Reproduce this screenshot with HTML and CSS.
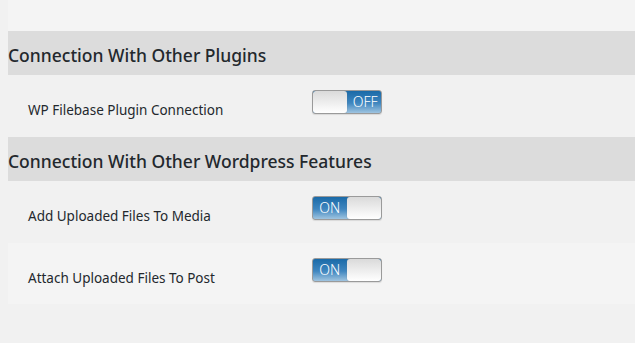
FILE: index.html
```html
<!DOCTYPE html>
<html lang="en">
<head>
	<meta charset="UTF-8">
	<title>Settings</title>
	<link rel="stylesheet" href="styles.css">
</head>
<body>
<div class="wrap">
	<div class="top-space"></div>

	<h3 class="section-title">Connection With Other Plugins</h3>
	<div class="row">
		<div class="label">WP Filebase Plugin Connection</div>
		<div class="field">
			<span class="switch off"><span class="knob"></span><span class="state">OFF</span></span>
		</div>
	</div>

	<h3 class="section-title">Connection With Other Wordpress Features</h3>
	<div class="row">
		<div class="label">Add Uploaded Files To Media</div>
		<div class="field">
			<span class="switch on"><span class="state">ON</span><span class="knob"></span></span>
		</div>
	</div>
	<div class="row alt">
		<div class="label">Attach Uploaded Files To Post</div>
		<div class="field">
			<span class="switch on"><span class="state">ON</span><span class="knob"></span></span>
		</div>
	</div>
</div>
</body>
</html>
```
FILE: styles.css
```css
*{
	margin: 0;
	padding: 0;
	box-sizing: border-box;
}
body{
	background: #f1f1f1;
	font-family: "Noto Sans", "Open Sans", sans-serif;
	color: #23282d;
	overflow: hidden;
}
.wrap{
	margin-left: 8px;
}
.top-space{
	height: 31px;
	background: #f4f4f4;
}
.section-title{
	height: 44px;
	background: #dcdcdc;
	font-size: 17.5px;
	font-weight: 500;
	line-height: 48px;
}
.row{
	display: flex;
	height: 62px;
}
.row.alt{
	background: #f4f4f4;
	height: 61px;
}
.label{
	width: 304px;
	padding: 26px 0 0 20px;
	font-size: 13.5px;
	line-height: 18px;
}
.field{
	padding-top: 15px;
}
/* toggle */
.switch{
	display: flex;
	width: 70px;
	height: 24px;
	border: 1px solid #9a9a9a;
	border-radius: 3px;
	overflow: hidden;
	background: linear-gradient(to bottom, #1a6aa8 0%, #3f86bf 55%, #9fc4e0 100%);
	box-shadow: 0 1px 1px rgba(0,0,0,0.1);
}
.switch .state{
	width: 34px;
	color: #fff;
	font-size: 14px;
	font-weight: 300;
	line-height: 22px;
	text-align: center;
}
.switch .knob{
	width: 35px;
	height: 22px;
	background: linear-gradient(to bottom, #dadada, #f4f4f4 70%, #fff);
	border-radius: 3px;
	box-shadow: 0 0 1px #777;
}
.switch.off .state{
	padding-left: 2px;
}
```
